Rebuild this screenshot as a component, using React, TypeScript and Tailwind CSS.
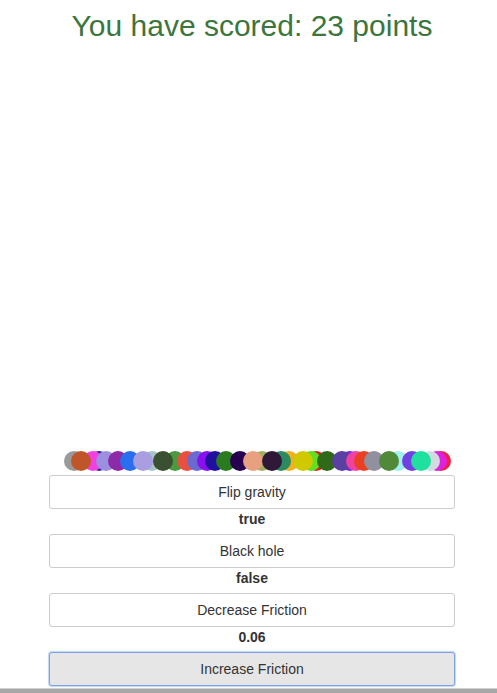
const balls: [number, string][] = [
  [74, '#9a9a9a'],
  [99, '#1a2a90'],
  [93, '#f040e0'],
  [81, '#c0552a'],
  [106, '#9b8fe0'],
  [118, '#8e2aa8'],
  [130, '#2a6ef0'],
  [152, '#a8c4c8'],
  [143, '#a89ee0'],
  [175, '#4a9a40'],
  [163, '#3a5030'],
  [187, '#e85040'],
  [197, '#6a6ad0'],
  [207, '#8a10f0'],
  [215, '#2010a0'],
  [226, '#2a7a20'],
  [240, '#280050'],
  [262, '#a0b060'],
  [253, '#e8a080'],
  [289, '#f0b020'],
  [281, '#2a8a60'],
  [272, '#301838'],
  [316, '#d02020'],
  [311, '#60e020'],
  [303, '#d0c800'],
  [327, '#306a18'],
  [350, '#7a20f0'],
  [342, '#5a40a0'],
  [356, '#f040a0'],
  [364, '#e84020'],
  [374, '#9090a0'],
  [398, '#a0f0f0'],
  [389, '#508a38'],
  [441, '#f02040'],
  [437, '#e020e0'],
  [430, '#d0dce0'],
  [412, '#7040e0'],
  [421, '#20e0a0'],
];

const controls = [
  { label: 'Flip gravity', value: 'true' },
  { label: 'Black hole', value: 'false' },
  { label: 'Decrease Friction', value: '0.06' },
];

export default function App() {
  return (
    <div className="w-[497px] h-[693px] overflow-hidden bg-white font-['Liberation_Sans',Arial,sans-serif] text-[#333] flex flex-col">
      <div className="w-[504px] flex flex-col items-center">
        <h2 className="mt-[9px] text-[30px] leading-[33px] text-[#3c763d]">You have scored: 23 points</h2>
        <div className="w-[406px] flex flex-col">
          <svg width="406" height="431" className="block">
            {balls.map(([x, c], i) => (
              <circle key={i} cx={x - 49} cy={419} r={10} fill={c} />
            ))}
          </svg>
          <div className="mt-[2px] flex flex-col">
            {controls.map((c) => (
              <div key={c.label} className="flex flex-col">
                <button className="h-[34px] w-full border border-[#ccc] rounded-[3px] bg-white text-[14px] leading-5">
                  {c.label}
                </button>
                <div className="h-5 mb-[5px] text-center text-[14px] leading-5 font-bold">{c.value}</div>
              </div>
            ))}
            <button className="h-[34px] w-full border border-[#7ea3e4] rounded-[3px] bg-[#e6e6e6] text-[14px] leading-5 shadow-[0_0_1px_1px_rgba(120,160,230,0.45)]">
              Increase Friction
            </button>
          </div>
        </div>
      </div>
      <div className="mt-auto h-[5px] w-full bg-[#a8a8a8] border-t border-[#d0d0d0]" />
    </div>
  );
}
